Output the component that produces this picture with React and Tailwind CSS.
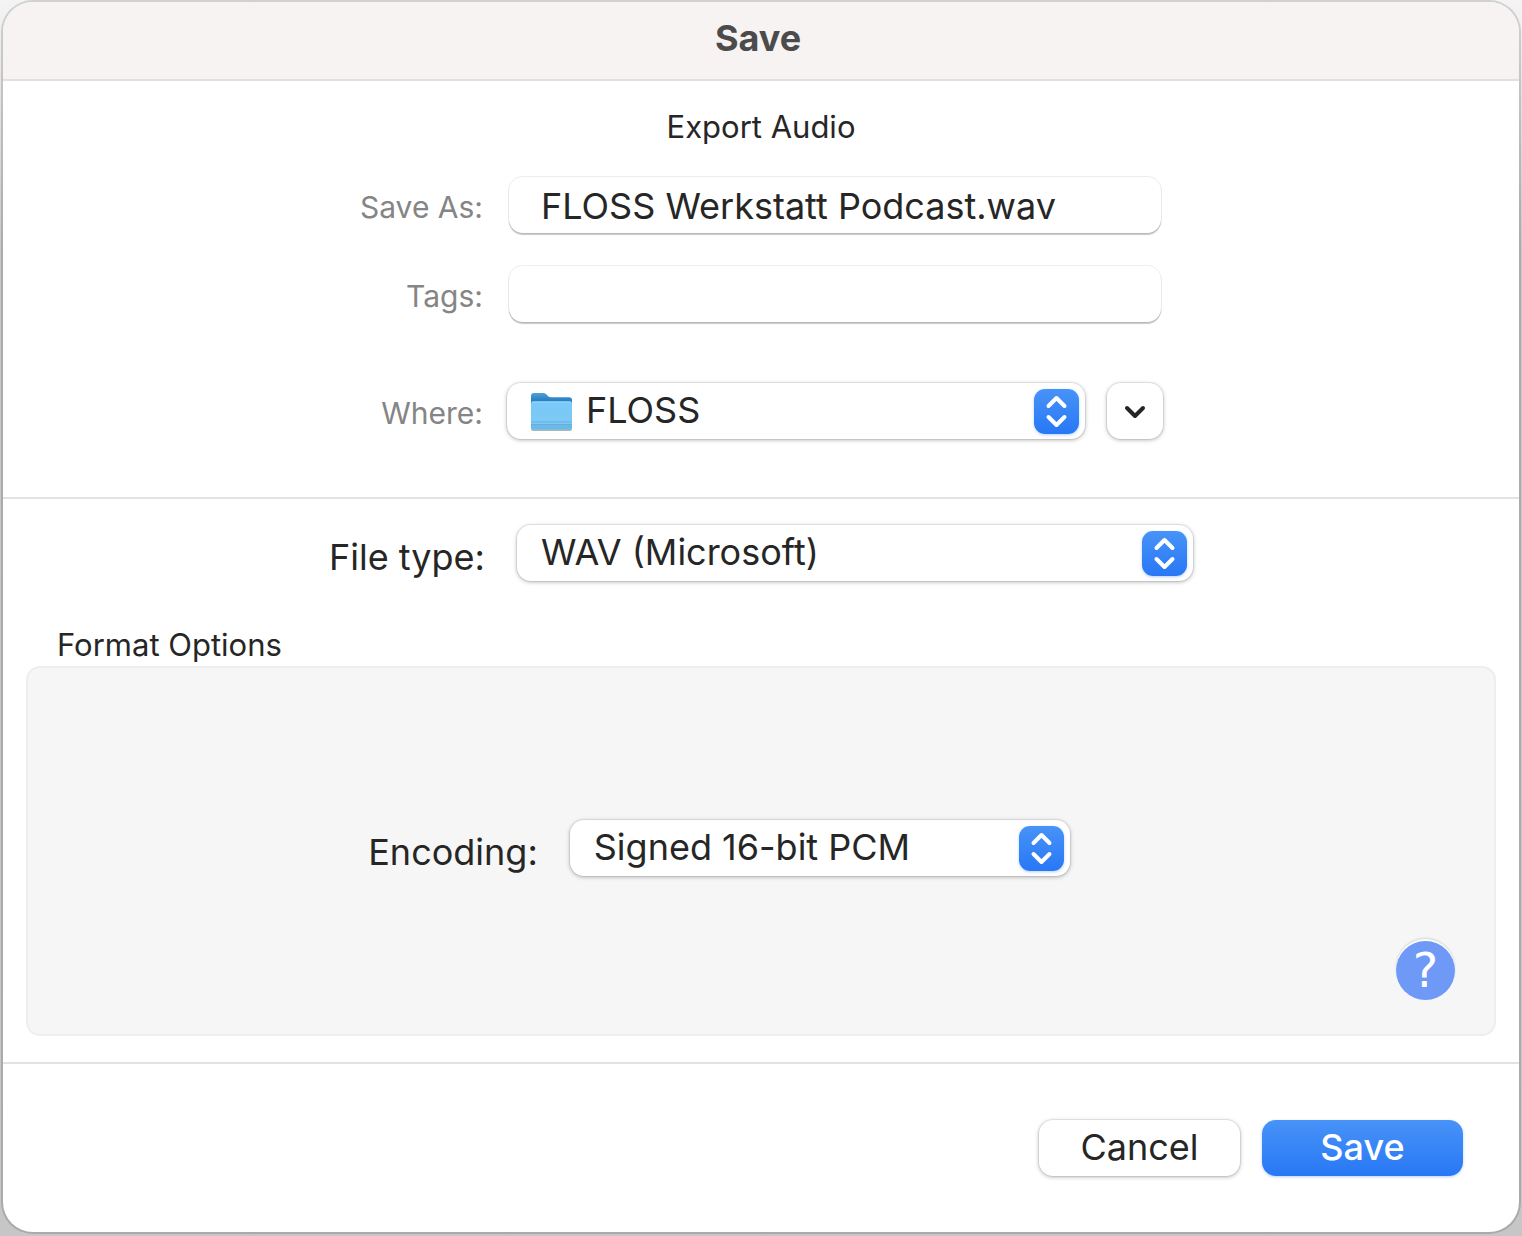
import React from "react";

const raised =
  "bg-white shadow-[0_0_0_1px_rgba(0,0,0,0.06),0_1px_4px_rgba(0,0,0,0.3)]";
const field =
  "mx-0.5 h-14 rounded-[14px] bg-white px-8 pt-0.5 text-[36px] leading-[56px] text-[#262626] outline-none shadow-[0_0_0_1px_rgba(0,0,0,0.07),0_2px_1px_rgba(0,0,0,0.22)]";

function FolderIcon() {
  return (
    <svg width="46" height="42" viewBox="0 0 46 42" aria-hidden="true">
      <defs>
        <linearGradient id="folderBack" x1="0" y1="0" x2="0" y2="1">
          <stop offset="0" stopColor="#4da0d8" />
          <stop offset="0.25" stopColor="#2b80c4" />
          <stop offset="1" stopColor="#2b80c4" />
        </linearGradient>
        <linearGradient id="folderFront" x1="0" y1="0" x2="0" y2="1">
          <stop offset="0" stopColor="#79c9f8" />
          <stop offset="1" stopColor="#80c8f3" />
        </linearGradient>
      </defs>
      <rect x="2" y="36" width="41" height="4" rx="2" fill="#6f8794" opacity="0.6" />
      <path d="M2 5q0-3 3-3h9q2 0 3 1l2.500 2.500q1 .8 2.500 .8H40q3 0 3 3V30H2z" fill="url(#folderBack)" />
      <path d="M2 12.500q0-2 2-2h37q2 0 2 2v24q0 2-2 2H4q-2 0-2-2z" fill="url(#folderFront)" />
      <path d="M3 11h39" stroke="#9adcff" strokeWidth="1" />
      <path d="M2 31h41M2 33.500h41" stroke="#62b0e0" strokeWidth="1" />
      <path d="M2 34h41v2.500q0 2-2 2H4q-2 0-2-2z" fill="#6bb9e6" />
    </svg>
  );
}

function Stepper() {
  return (
    <span className="pointer-events-none absolute top-1.5 right-1.5 flex size-[45px] items-center justify-center rounded-[11px] bg-linear-to-b from-[#4793f8] to-[#2877f5] shadow-[0_1px_3px_rgba(40,119,245,0.35)]">
      <svg width="45" height="45" viewBox="0 0 45 45" fill="none" stroke="white" strokeWidth="4" strokeLinecap="round" strokeLinejoin="round" aria-hidden="true">
        <path d="M14.500 17 22.500 9 30.500 17M14.500 28 22.500 36 30.500 28" />
      </svg>
    </span>
  );
}

function Popup({ id, value, icon, className }) {
  return (
    <div className={`relative h-14 rounded-[14px] ${raised} ${className}`}>
      {icon && <span className="pointer-events-none absolute top-2 left-[22px]">{icon}</span>}
      <select
        id={id}
        className={`h-14 w-full appearance-none rounded-[14px] bg-transparent pr-14 text-[36px] leading-[52px] text-[#262626] outline-none ${icon ? "pl-[79px]" : "pl-6"} pb-0.5`}
      >
        <option>{value}</option>
      </select>
      <Stepper />
    </div>
  );
}

function Label({ htmlFor, children }) {
  return (
    <label htmlFor={htmlFor} className="h-14 text-right text-[30px] leading-[60px] whitespace-nowrap text-[#858585]">
      {children}
    </label>
  );
}

export default function App() {
  return (
    <div className="flex min-h-screen bg-linear-to-b from-[#f4f4f4] via-[#c8c8c8] via-20% to-[#c6c6c6] px-[3px] pt-0.5 pb-1 font-['Inter',sans-serif] text-[#262626]">
      <main className="flex w-full flex-col overflow-hidden rounded-[30px] bg-white shadow-[0_0_0_2px_rgba(0,0,0,0.14)]">
        <header className="border-b-2 border-[#e1dfdf] bg-[#f7f3f2] pt-2 pr-1.5 pb-3">
          <h1 className="text-center text-[36px] leading-[57px] font-bold text-[#4b4b4b]">Save</h1>
        </header>

        <section className="border-b-2 border-[#e2e2e2] pt-6 pb-[58px]">
          <p className="text-center text-[31px] leading-[44px]">Export Audio</p>
          <div className="mt-7 grid grid-cols-[124px_656px] justify-center gap-x-6">
            <Label htmlFor="save-as">Save As:</Label>
            <input id="save-as" className={field} defaultValue="FLOSS Werkstatt Podcast.wav" />
            <div className="col-span-2 h-[33px]" />
            <Label htmlFor="tags">Tags:</Label>
            <input id="tags" className={field} />
            <div className="col-span-2 h-[61px]" />
            <Label htmlFor="where">Where:</Label>
            <div className="flex gap-[22px]">
              <Popup id="where" value="FLOSS" icon={<FolderIcon />} className="flex-1" />
              <button aria-label="Expand" className={`flex size-14 items-center justify-center rounded-[14px] ${raised}`}>
                <svg width="24" height="24" viewBox="0 0 24 24" fill="none" stroke="#262626" strokeWidth="4" strokeLinecap="round" strokeLinejoin="round" aria-hidden="true">
                  <path d="M4 9l8 8 8-8" />
                </svg>
              </button>
            </div>
          </div>
        </section>

        <section className="flex flex-1 flex-col border-b-2 border-[#e2e2e2] px-[23px] pt-[26px] pb-[26px]">
          <div className="flex justify-center gap-8">
            <label htmlFor="file-type" className="pt-1 text-[36px] leading-[56px]">File type:</label>
            <Popup id="file-type" value="WAV (Microsoft)" className="w-[676px]" />
          </div>
          <h2 className="mt-[39px] pl-[31px] text-[31px] leading-[42px]">Format Options</h2>
          <div className="flex flex-1 flex-col rounded-[14px] border-2 border-[#eeeeee] bg-[#f6f6f6] px-[39px] pt-[152px] pb-[34px]">
            <div className="flex justify-center gap-8 pr-[84px]">
              <label htmlFor="encoding" className="pt-1 text-[36px] leading-[56px]">Encoding:</label>
              <Popup id="encoding" value="Signed 16-bit PCM" className="w-[500px]" />
            </div>
            <button aria-label="Help" className="mt-auto flex size-[59px] items-center justify-center self-end rounded-full bg-[#6f99f7] font-['DejaVu_Sans',sans-serif] text-[48px] leading-[59px] text-white shadow-[0_-2px_1px_#ffffff,0_-3px_2px_rgba(0,0,0,0.15)]">
              ?
            </button>
          </div>
        </section>

        <footer className="flex justify-end gap-[22px] px-14 pt-14 pb-14 text-[36px] leading-[52px]">
          <button className={`h-14 w-[201px] rounded-[14px] pb-0.5 ${raised}`}>Cancel</button>
          <button className="h-14 w-[201px] rounded-[14px] bg-linear-to-b from-[#4793f8] to-[#2877f5] pb-0.5 font-medium text-white shadow-[0_1px_3px_rgba(40,119,245,0.35)]">
            Save
          </button>
        </footer>
      </main>
    </div>
  );
}
